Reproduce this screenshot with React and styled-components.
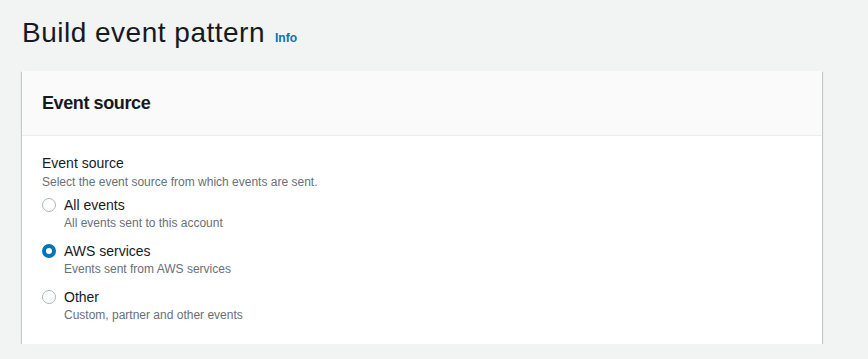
import React, { useState } from 'react';
import styled, { createGlobalStyle } from 'styled-components';

const GlobalStyle = createGlobalStyle`
  html, body {
    margin: 0;
    background: #f2f3f3;
    font-family: "Liberation Sans", Arial, sans-serif;
    color: #16191f;
  }
`;

const Page = styled.div`
  padding: 15px 46px 0 22px;
`;

const TitleRow = styled.div`
  display: flex;
  align-items: baseline;
  gap: 10px;
  margin-bottom: 20px;
`;

const Title = styled.h1`
  margin: 0;
  font-size: 28px;
  line-height: 36px;
  font-weight: 400;
  letter-spacing: 0.5px;
  color: #16191f;
`;

const InfoLink = styled.a`
  font-size: 12px;
  font-weight: 700;
  color: #0073bb;
  text-decoration: none;
`;

const Card = styled.div`
  background: #fff;
  box-shadow: 0 1px 1px 0 rgba(0, 28, 36, 0.3), 1px 1px 1px 0 rgba(0, 28, 36, 0.15),
    -1px 1px 1px 0 rgba(0, 28, 36, 0.15);
`;

const CardHeader = styled.div`
  background: #fafafa;
  border-bottom: 1px solid #eaeded;
  padding: 21px 20px;
`;

const CardTitle = styled.h2`
  margin: 0;
  font-size: 18px;
  line-height: 22px;
  font-weight: 700;
  letter-spacing: -0.4px;
`;

const CardBody = styled.div`
  padding: 16px 20px 21px;
`;

const Label = styled.div`
  font-size: 14px;
  line-height: 22px;
`;

const Hint = styled.div`
  font-size: 12px;
  line-height: 16px;
  color: #687078;
`;

const RadioGroup = styled.div`
  display: flex;
  flex-direction: column;
  gap: 10px;
  margin-top: 5px;
`;

const Option = styled.label`
  display: grid;
  grid-template-columns: 14px 1fr;
  column-gap: 8px;
  cursor: pointer;
`;

const Circle = styled.span`
  width: 14px;
  height: 14px;
  margin-top: 3px;
  box-sizing: border-box;
  border-radius: 50%;
  border: ${p => (p.$checked ? '4px solid #0073bb' : '1px solid #aab7b8')};
  background: #fff;
`;

const OptionLabel = styled.div`
  font-size: 14px;
  line-height: 20px;
`;

const options = [
  { id: 'all', label: 'All events', hint: 'All events sent to this account' },
  { id: 'aws', label: 'AWS services', hint: 'Events sent from AWS services' },
  { id: 'other', label: 'Other', hint: 'Custom, partner and other events' },
];

const App = () => {
  const [source, setSource] = useState('aws');

  return (
    <Page>
      <GlobalStyle />
      <TitleRow>
        <Title>Build event pattern</Title>
        <InfoLink href="#">Info</InfoLink>
      </TitleRow>
      <Card>
        <CardHeader>
          <CardTitle>Event source</CardTitle>
        </CardHeader>
        <CardBody>
          <Label>Event source</Label>
          <Hint>Select the event source from which events are sent.</Hint>
          <RadioGroup>
            {options.map(o => (
              <Option key={o.id} onClick={() => setSource(o.id)}>
                <Circle $checked={source === o.id} />
                <div>
                  <OptionLabel>{o.label}</OptionLabel>
                  <Hint>{o.hint}</Hint>
                </div>
              </Option>
            ))}
          </RadioGroup>
        </CardBody>
      </Card>
    </Page>
  );
};

export default App;
